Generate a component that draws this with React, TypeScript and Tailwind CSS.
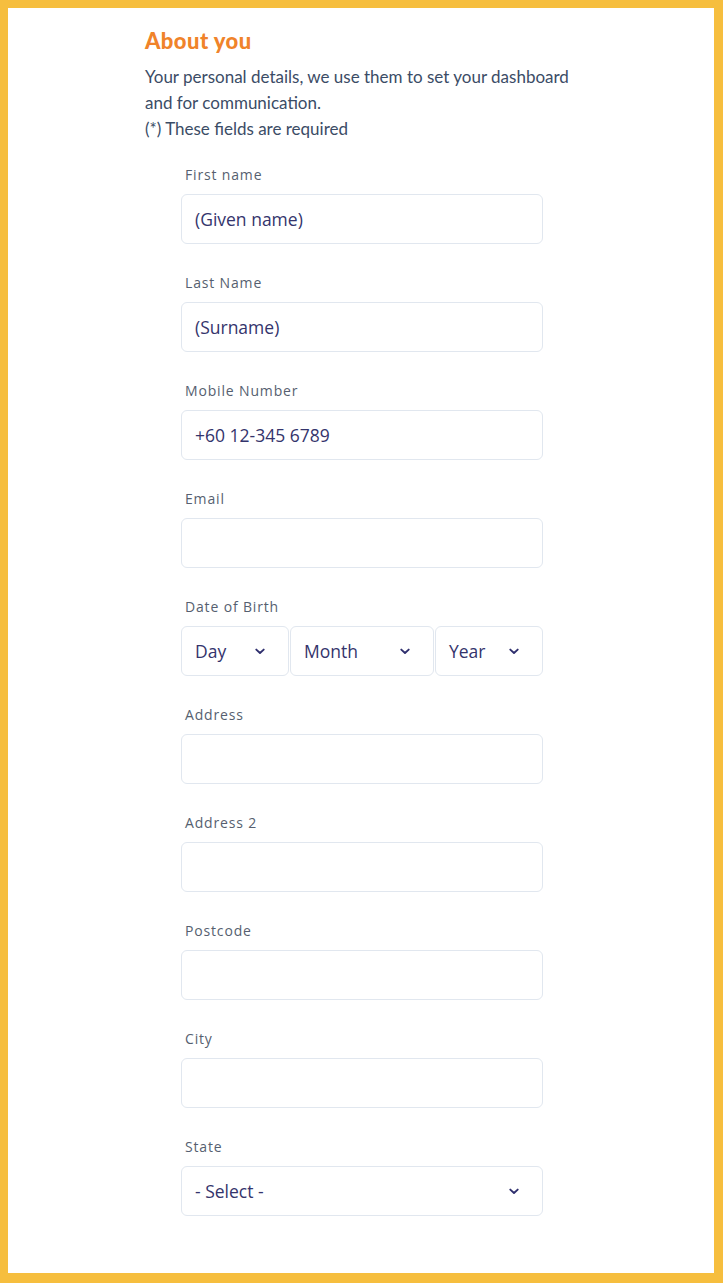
import React from "react";

const Chevron = () => (
  <svg width="10" height="7" viewBox="0 0 10 7" fill="none" className="shrink-0">
    <path d="M1.3 1.6L5 5L8.7 1.6" stroke="#2f2f6e" strokeWidth="1.9" strokeLinecap="round" strokeLinejoin="round" />
  </svg>
);

const fields = [
  { label: "First name", value: "(Given name)" },
  { label: "Last Name", value: "(Surname)" },
  { label: "Mobile Number", value: "+60 12-345 6789" },
  { label: "Email", value: "" },
];

const lowerFields = ["Address", "Address 2", "Postcode", "City"];

function Label({ children }: { children: React.ReactNode }) {
  return (
    <p className="h-5 mb-[9px] pl-1 text-[14px] leading-5 tracking-[0.06em] text-[#565f70] font-['Open_Sans',sans-serif]">
      {children}
    </p>
  );
}

function TextBox({ value }: { value: string }) {
  return (
    <div className="h-[50px] rounded-md border border-[#e1e7ef] bg-white flex items-center px-[13px] text-[17.5px] text-[#34346c] font-['Open_Sans',sans-serif]">
      {value}
    </div>
  );
}

function SelectBox({ text, className }: { text: string; className: string }) {
  return (
    <div
      className={`h-[50px] rounded-md border border-[#e1e7ef] bg-white flex items-center justify-between pl-[13px] pr-[23px] text-[17.5px] text-[#34346c] font-['Open_Sans',sans-serif] ${className}`}
    >
      <span>{text}</span>
      <Chevron />
    </div>
  );
}

export default function App() {
  return (
    <div className="min-h-screen bg-[#f6be3e] pt-2 pl-2 pr-[9px] pb-[10px]">
      <div className="bg-white h-[1265px] pt-[19px] pl-[137px]">
        <h2 className="text-[22px] leading-7 font-black text-[#f0832a] mb-[9px] font-['Lato',sans-serif] tracking-[0.02em]">
          About you
        </h2>
        <div className="text-[17px] leading-[26px] text-[#3b4c66] font-['Lato',sans-serif] w-[440px]">
          <p>Your personal details, we use them to set your dashboard and for communication.</p>
          <p>(*) These fields are required</p>
        </div>

        <div className="mt-[23px] ml-9 w-[362px] flex flex-col gap-[29px]">
          {fields.map((f) => (
            <div key={f.label}>
              <Label>{f.label}</Label>
              <TextBox value={f.value} />
            </div>
          ))}

          <div>
            <Label>Date of Birth</Label>
            <div className="flex gap-px">
              <SelectBox text="Day" className="w-[108px]" />
              <SelectBox text="Month" className="w-[144px]" />
              <SelectBox text="Year" className="w-[108px]" />
            </div>
          </div>

          {lowerFields.map((l) => (
            <div key={l}>
              <Label>{l}</Label>
              <TextBox value="" />
            </div>
          ))}

          <div>
            <Label>State</Label>
            <SelectBox text="- Select -" className="w-full" />
          </div>
        </div>
      </div>
    </div>
  );
}
